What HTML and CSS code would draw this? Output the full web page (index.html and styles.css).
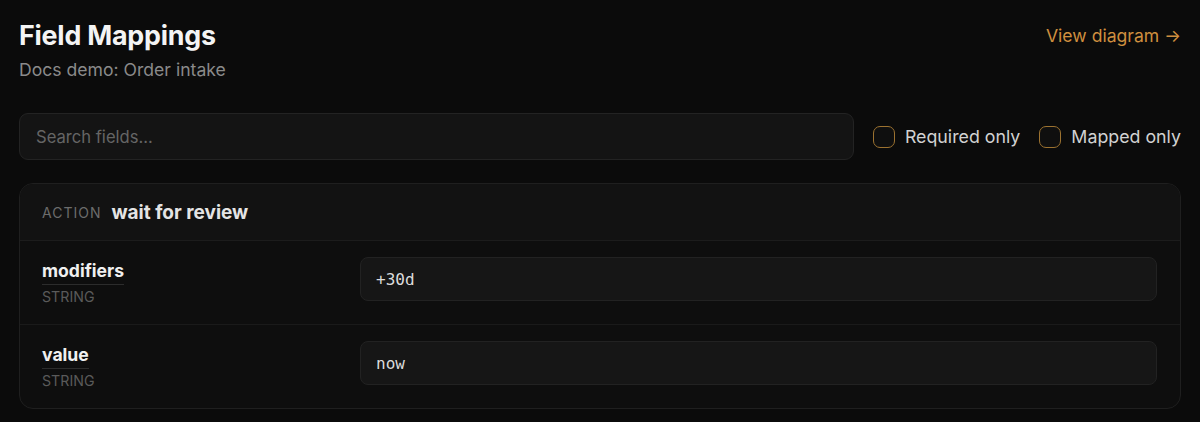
FILE: index.html
```html
<!DOCTYPE html>
<html lang="en">
<head>
<meta charset="utf-8">
<title>Field Mappings</title>
<link rel="stylesheet" href="styles.css">
</head>
<body>
<main class="page">
  <header class="page-header">
    <div class="titles">
      <h1 class="title">Field Mappings</h1>
      <p class="subtitle">Docs demo: Order intake</p>
    </div>
    <a class="diagram-link" href="#">View diagram →</a>
  </header>

  <div class="toolbar">
    <input class="search" type="text" placeholder="Search fields...">
    <label class="check"><span class="box"></span><span class="check-label">Required only</span></label>
    <label class="check"><span class="box"></span><span class="check-label">Mapped only</span></label>
  </div>

  <section class="card">
    <div class="card-head">
      <span class="kind">ACTION</span>
      <span class="action-name">wait for review</span>
    </div>
    <div class="row">
      <div class="field">
        <span class="field-name">modifiers</span>
        <span class="field-type">STRING</span>
      </div>
      <div class="value-box">+30d</div>
    </div>
    <div class="row">
      <div class="field">
        <span class="field-name">value</span>
        <span class="field-type">STRING</span>
      </div>
      <div class="value-box">now</div>
    </div>
  </section>
</main>
</body>
</html>
```

FILE: styles.css
```css
* { box-sizing: border-box; }

html, body {
  margin: 0;
  background: #0b0b0b;
  color: #e6e6e6;
  font-family: Inter, "Noto Sans", sans-serif;
}

.page {
  padding: 19px 19px 0 19px;
}

.page-header {
  display: flex;
  justify-content: space-between;
  align-items: flex-start;
}

.title {
  margin: 0;
  font-size: 26.8px;
  line-height: 32px;
  font-weight: 700;
  color: #f4f4f4;
  letter-spacing: -0.2px;
}

.subtitle {
  margin: 8px 0 0;
  font-size: 17.6px;
  line-height: 22px;
  color: #8a8a8a;
}

.diagram-link {
  margin-top: 6px;
  font-size: 17.6px;
  line-height: 22px;
  color: #cf8f3f;
  text-decoration: none;
}

.toolbar {
  margin-top: 32px;
  display: flex;
  align-items: center;
  gap: 19px;
}

.search {
  flex: 1;
  height: 47px;
  padding: 0 16px;
  background: #141414;
  border: 1px solid #232323;
  border-radius: 9px;
  font: inherit;
  font-size: 16.6px;
  color: #ddd;
  outline: none;
}

.search::placeholder { color: #656565; }

.check {
  display: flex;
  align-items: center;
  gap: 10px;
  font-size: 17.8px;
  color: #d2d2d2;
}

.box {
  width: 22px;
  height: 22px;
  border: 1.5px solid #9c7230;
  border-radius: 7px;
  background: #0f0f0f;
}

.card {
  margin-top: 23px;
  border: 1px solid #1f1f1f;
  border-radius: 14px;
  background: #0e0e0e;
  overflow: hidden;
}

.card-head {
  height: 57px;
  display: flex;
  align-items: center;
  gap: 10px;
  padding: 0 22px;
  background: #121212;
  border-bottom: 1px solid #1c1c1c;
}

.kind {
  font-size: 14px;
  letter-spacing: 1px;
  color: #6c6c6c;
}

.action-name {
  font-size: 19px;
  font-weight: 700;
  color: #e4e4e4;
}

.row {
  display: grid;
  grid-template-columns: 318px 1fr;
  align-items: start;
  padding: 16px 23px 17px 22px;
}

.row + .row {
  border-top: 1px solid #1a1a1a;
}

.field {
  display: flex;
  flex-direction: column;
  align-items: flex-start;
  padding-top: 3px;
  height: 50px;
}

.field-name {
  font-size: 17.6px;
  line-height: 22px;
  font-weight: 700;
  color: #f0f0f0;
  padding-bottom: 2px;
  border-bottom: 1px solid #2c2c2c;
}

.field-type {
  margin-top: 3px;
  font-size: 14.2px;
  line-height: 18px;
  color: #5a5a5a;
}

.value-box {
  height: 44px;
  display: flex;
  align-items: center;
  padding: 0 15px;
  background: #161616;
  border: 1px solid #222;
  border-radius: 8px;
  font-family: "DejaVu Sans Mono", monospace;
  font-size: 16px;
  color: #dcdcdc;
}
```
